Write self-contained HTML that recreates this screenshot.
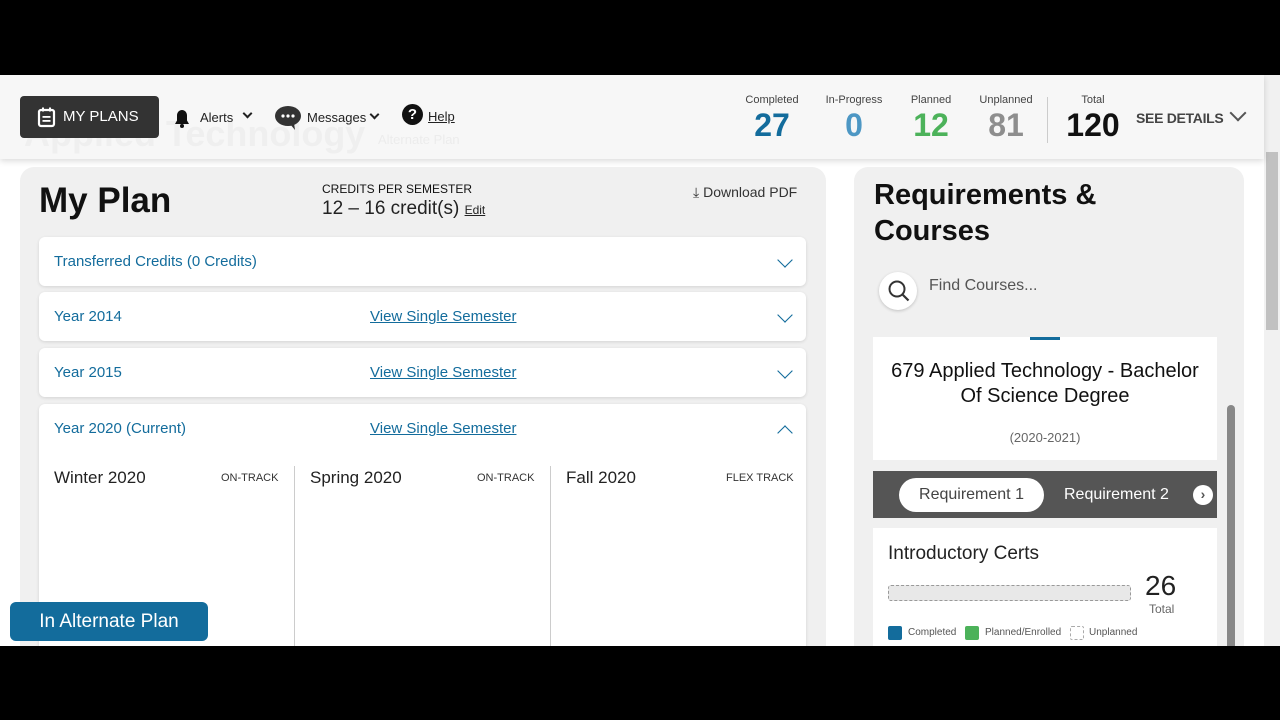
<!DOCTYPE html><html><head><style>
*{box-sizing:border-box;margin:0;padding:0}
body{width:1280px;height:720px;background:#000;font-family:"Liberation Sans",sans-serif;position:relative;overflow:hidden}
.page{position:absolute;left:0;top:75px;width:1280px;height:571px;background:#fff;overflow:hidden}
.hdr{position:absolute;left:0;top:0;width:1264px;height:84px;background:#f7f7f7;box-shadow:0 2px 6px rgba(0,0,0,.15);z-index:3}
.abs{position:absolute}
.lp{position:absolute;left:20px;top:92px;width:806px;height:500px;background:#f0f0f0;border-radius:14px}
.rp{position:absolute;left:854px;top:92px;width:390px;height:500px;background:#f0f0f0;border-radius:14px}
.card{position:absolute;left:19px;width:767px;background:#fff;border-radius:6px;box-shadow:0 1px 3px rgba(0,0,0,.12)}
.card .t{position:absolute;left:15px;top:16px;font-size:15px;color:#136c9c}
.card .v{position:absolute;left:331px;top:16px;font-size:15px;color:#136c9c;text-decoration:underline}
.chev{position:absolute;right:16px;top:18px;width:10px;height:10px;border-right:1.6px solid #136c9c;border-bottom:1.6px solid #136c9c;transform:rotate(45deg) scale(1.1)}
.stat{position:absolute;text-align:center;top:19px}
.stat .l{font-size:11px;color:#444}
.stat .n{font-size:32px;font-weight:bold;line-height:38px}
.sem{position:absolute;top:64px;font-size:17px;color:#222}
.trk{position:absolute;top:68px;font-size:11px;color:#333}
</style></head><body>
<div class="page">
<div class="hdr">
 <div class="abs" style="left:20px;top:21px;width:139px;height:42px;background:#333;border-radius:4px;color:#fff;font-size:15px;line-height:42px;padding-left:43px">MY PLANS</div>
 <svg class="abs" style="left:37px;top:32px" width="20" height="21" viewBox="0 0 20 21"><rect x="2" y="3" width="15" height="16" rx="2" fill="none" stroke="#fff" stroke-width="2.2"/><rect x="5" y="0.5" width="2" height="4" fill="#fff"/><rect x="12" y="0.5" width="2" height="4" fill="#fff"/><rect x="5.5" y="9" width="8" height="1.8" fill="#fff"/><rect x="5.5" y="13" width="8" height="1.8" fill="#fff"/></svg>
 <div class="abs" style="left:24px;top:38px;font-size:36px;font-weight:bold;color:#efefef;z-index:-1">Applied Technology</div>
 <div class="abs" style="left:378px;top:57px;font-size:13px;color:#ececec;z-index:-1">Alternate Plan</div>
 <svg class="abs" style="left:174px;top:34px" width="16" height="20" viewBox="0 0 16 20"><path d="M8 1c-3 0-5 2.5-5 5.5v5L1 15h14l-2-3.5v-5C13 3.5 11 1 8 1z" fill="#111"/><circle cx="8" cy="17" r="2" fill="#111"/></svg>
 <div class="abs" style="left:200px;top:35px;font-size:13px;color:#222">Alerts</div>
 <div class="abs" style="left:244px;top:35px;width:7px;height:7px;border-right:2px solid #222;border-bottom:2px solid #222;transform:rotate(45deg)"></div>
 <svg class="abs" style="left:274px;top:30px" width="28" height="26" viewBox="0 0 28 26"><ellipse cx="14" cy="11" rx="13" ry="10" fill="#333"/><path d="M16 19l5 6-1-7z" fill="#333"/><circle cx="9" cy="11" r="1.6" fill="#fff"/><circle cx="14" cy="11" r="1.6" fill="#fff"/><circle cx="19" cy="11" r="1.6" fill="#fff"/></svg>
 <div class="abs" style="left:307px;top:35px;font-size:13px;color:#222">Messages</div>
 <div class="abs" style="left:371px;top:36px;width:7px;height:7px;border-right:2px solid #222;border-bottom:2px solid #222;transform:rotate(45deg)"></div>
 <div class="abs" style="left:402px;top:29px;width:21px;height:21px;border-radius:50%;background:#111;color:#fff;font-weight:bold;font-size:15px;text-align:center;line-height:21px">?</div>
 <div class="abs" style="left:428px;top:34px;font-size:13px;color:#222;text-decoration:underline">Help</div>
 <div class="stat" style="left:742px;width:60px"><div class="l">Completed</div><div class="n" style="color:#136c9c">27</div></div>
 <div class="stat" style="left:822px;width:64px"><div class="l">In-Progress</div><div class="n" style="color:#4d97c4">0</div></div>
 <div class="stat" style="left:900px;width:62px"><div class="l">Planned</div><div class="n" style="color:#4cb25a">12</div></div>
 <div class="stat" style="left:976px;width:60px"><div class="l">Unplanned</div><div class="n" style="color:#8e8e8e">81</div></div>
 <div class="abs" style="left:1047px;top:22px;width:1px;height:46px;background:#ccc"></div>
 <div class="stat" style="left:1060px;width:66px"><div class="l">Total</div><div class="n" style="color:#111">120</div></div>
 <div class="abs" style="left:1136px;top:35px;font-size:14px;font-weight:bold;color:#444;letter-spacing:-0.3px">SEE DETAILS</div>
 <div class="abs" style="left:1232px;top:32px;width:12px;height:12px;border-right:2px solid #555;border-bottom:2px solid #555;transform:rotate(45deg)"></div>
</div>
<div class="lp">
 <div class="abs" style="left:19px;top:14px;font-size:35px;font-weight:bold;color:#111">My Plan</div>
 <div class="abs" style="left:302px;top:15px;font-size:12px;color:#111">CREDITS PER SEMESTER</div>
 <div class="abs" style="left:302px;top:31px;font-size:19px;color:#222">12 – 16 credit(s) <span style="font-size:12px;text-decoration:underline">Edit</span></div>
 <div class="abs" style="left:673px;top:17px;font-size:14px;color:#333">⤓ Download PDF</div>
 <div class="card" style="top:70px;height:49px"><div class="t">Transferred Credits (0 Credits)</div><div class="chev"></div></div>
 <div class="card" style="top:125px;height:49px"><div class="t">Year 2014</div><div class="v">View Single Semester</div><div class="chev"></div></div>
 <div class="card" style="top:181px;height:49px"><div class="t">Year 2015</div><div class="v">View Single Semester</div><div class="chev"></div></div>
 <div class="card" style="top:237px;height:300px"><div class="t">Year 2020 (Current)</div><div class="v">View Single Semester</div><div class="chev" style="transform:rotate(-135deg) scale(1.1);top:24px"></div>
  <div class="sem" style="left:15px">Winter 2020</div><div class="trk" style="left:182px">ON-TRACK</div>
  <div class="abs" style="left:255px;top:62px;width:1px;height:200px;background:#ccc"></div>
  <div class="sem" style="left:271px">Spring 2020</div><div class="trk" style="left:438px">ON-TRACK</div>
  <div class="abs" style="left:511px;top:62px;width:1px;height:200px;background:#ccc"></div>
  <div class="sem" style="left:527px">Fall 2020</div><div class="trk" style="left:687px">FLEX TRACK</div>
 </div>
</div>
<div class="abs" style="left:10px;top:527px;width:198px;height:39px;background:#136c9c;border-radius:6px;color:#fff;font-size:19px;line-height:39px;text-align:center">In Alternate Plan</div>
<div class="rp">
 <div class="abs" style="left:20px;top:10px;font-size:29px;font-weight:bold;color:#111;line-height:36px">Requirements &amp;<br>Courses</div>
 <div class="abs" style="left:25px;top:105px;width:38px;height:38px;border-radius:50%;background:#fff;box-shadow:0 1px 3px rgba(0,0,0,.2)"></div>
 <svg class="abs" style="left:33px;top:112px" width="24" height="24" viewBox="0 0 24 24"><circle cx="10" cy="10" r="7.5" fill="none" stroke="#333" stroke-width="2"/><path d="M15.5 15.5l6 6" stroke="#333" stroke-width="2.2"/></svg>
 <div class="abs" style="left:75px;top:110px;font-size:16px;color:#555">Find Courses...</div>
 <div class="abs" style="left:19px;top:170px;width:344px;height:123px;background:#fff">
  <div class="abs" style="left:157px;top:0;width:30px;height:3px;background:#136c9c"></div>
  <div class="abs" style="left:0;top:22px;width:344px;text-align:center;font-size:20px;color:#111;line-height:25px">679 Applied Technology - Bachelor<br>Of Science Degree</div>
  <div class="abs" style="left:0;top:93px;width:344px;text-align:center;font-size:13px;color:#666">(2020-2021)</div>
 </div>
 <div class="abs" style="left:19px;top:304px;width:344px;height:47px;background:#555">
  <div class="abs" style="left:26px;top:7px;width:145px;height:34px;border-radius:17px;background:#fff;color:#444;font-size:16px;text-align:center;line-height:34px">Requirement 1</div>
  <div class="abs" style="left:191px;top:15px;color:#fff;font-size:16px">Requirement 2</div>
  <div class="abs" style="left:320px;top:14px;width:20px;height:20px;border-radius:50%;background:#fff;color:#555;font-weight:bold;font-size:14px;text-align:center;line-height:19px">›</div>
 </div>
 <div class="abs" style="left:19px;top:361px;width:344px;height:140px;background:#fff">
  <div class="abs" style="left:15px;top:15px;font-size:19px;color:#222">Introductory Certs</div>
  <div class="abs" style="left:15px;top:57px;width:243px;height:16px;border:1px dashed #999;background:#e8e8e8;border-radius:3px"></div>
  <div class="abs" style="left:272px;top:42px;font-size:28px;color:#222">26</div>
  <div class="abs" style="left:276px;top:74px;font-size:12px;color:#666">Total</div>
  <div class="abs" style="left:15px;top:98px;width:14px;height:14px;background:#136c9c;border-radius:2px"></div>
  <div class="abs" style="left:35px;top:99px;font-size:10px;color:#555">Completed</div>
  <div class="abs" style="left:92px;top:98px;width:14px;height:14px;background:#4cb25a;border-radius:2px"></div>
  <div class="abs" style="left:112px;top:99px;font-size:10px;color:#555">Planned/Enrolled</div>
  <div class="abs" style="left:197px;top:98px;width:14px;height:14px;border:1px dashed #aaa;border-radius:2px"></div>
  <div class="abs" style="left:216px;top:99px;font-size:10px;color:#555">Unplanned</div>
 </div>
 <div class="abs" style="left:373px;top:238px;width:8px;height:262px;background:#888;border-radius:4px"></div>
</div>
<div class="abs" style="left:1264px;top:0;width:16px;height:571px;background:#f1f1f1"></div>
<div class="abs" style="left:1266px;top:77px;width:12px;height:178px;background:#c1c1c1"></div>
</div>
</body></html>
